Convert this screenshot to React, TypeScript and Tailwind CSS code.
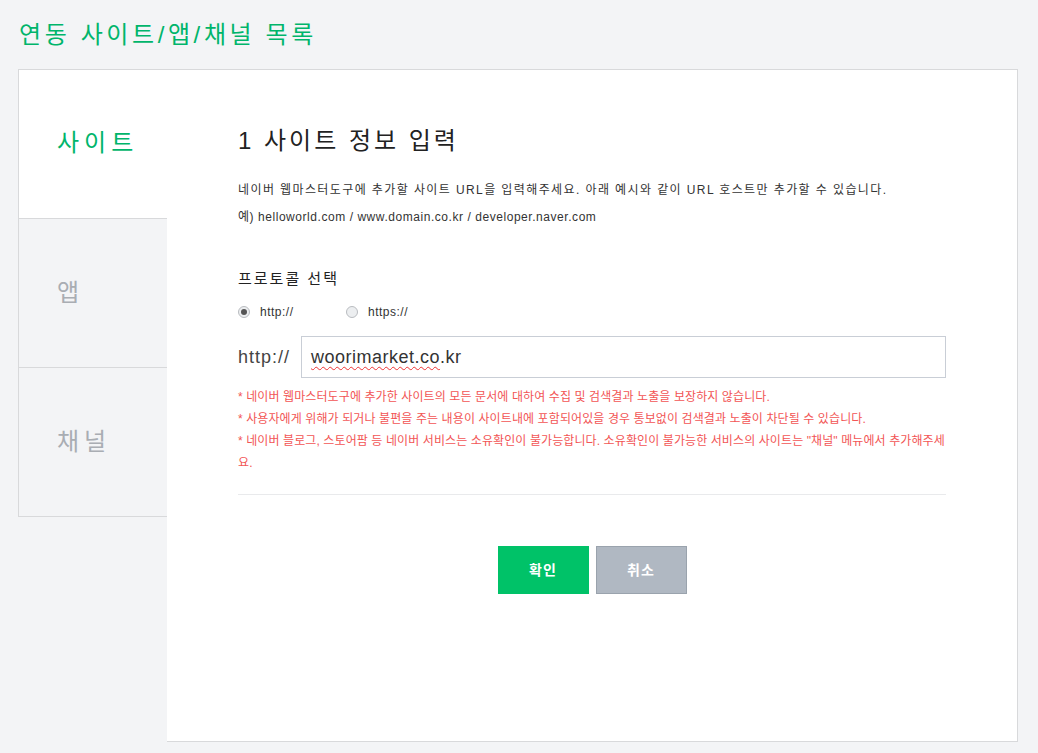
import React from "react";

const font = { fontFamily: '"Liberation Sans", "Noto Sans CJK KR", sans-serif' };

function Radio({ checked, label }: { checked?: boolean; label: string }) {
  return (
    <div className="flex items-center">
      <span className="w-[12px] h-[12px] rounded-full border border-[#b9bcc0] bg-[#eceef0] flex items-center justify-center">
        {checked && <span className="w-[6px] h-[6px] rounded-full bg-[#555]" />}
      </span>
      <span className="ml-[10px] text-[12px] text-[#333] tracking-[0.5px]">{label}</span>
    </div>
  );
}

export default function App() {
  return (
    <div className="min-h-[753px] bg-[#f3f4f6] pb-[11px]" style={font}>
      <div className="h-[70px] flex items-center pl-[19px] text-[24px] text-[#00b56b] tracking-[3.6px]">
        연동 사이트/앱/채널 목록
      </div>
      <div className="flex ml-[18px] mr-[20px] -mt-px">
        <div className="w-[150px] flex flex-col shrink-0">
          <div className="h-[149px] bg-white border-t border-l border-[#d8d9db] flex items-center pl-[38px] pb-[2px] text-[24px] text-[#00b56b] tracking-[5px]">
            사이트
          </div>
          <div className="h-[149px] bg-[#f3f4f6] border-t border-l border-r border-[#d8d9db] flex items-center pl-[38px] text-[24px] text-[#a9adb3]">
            앱
          </div>
          <div className="h-[150px] bg-[#f3f4f6] border-t border-b border-l border-r border-[#d8d9db] flex items-center pl-[38px] text-[24px] text-[#a9adb3] tracking-[5px]">
            채널
          </div>
          <div className="flex-1 border-r border-[#d8d9db]" />
        </div>
        <div className="flex-1 bg-white border-t border-r border-b border-[#d8d9db] pl-[71px] pr-[71px] pt-[55px] pb-[147px] -ml-px">
          <div className="text-[24px] leading-[32px] text-[#222] tracking-[3px]">1 사이트 정보 입력</div>
          <div className="mt-[20px] text-[12px] leading-[27px] text-[#333]">
            <div className="tracking-[1.4px] whitespace-nowrap">네이버 웹마스터도구에 추가할 사이트 URL을 입력해주세요. 아래 예시와 같이 URL 호스트만 추가할 수 있습니다.</div>
            <div className="tracking-[0.55px] whitespace-nowrap">예) helloworld.com / www.domain.co.kr / developer.naver.com</div>
          </div>
          <div className="mt-[37px] text-[15px] leading-[22px] text-[#222] tracking-[2px]">프로토콜 선택</div>
          <div className="mt-[12px] h-[20px] flex items-center">
            <div className="w-[108px]">
              <Radio checked label="http://" />
            </div>
            <Radio label="https://" />
          </div>
          <div className="mt-[14px] flex items-center h-[42px]">
            <span className="text-[18px] text-[#444] w-[63px] tracking-[1px]">http://</span>
            <div className="flex-1 h-[42px] border border-[#c9ced6] flex items-center pl-[9px] text-[18px] text-[#333] tracking-[0.5px]">
              <span className="underline decoration-wavy decoration-[#e33] decoration-1 underline-offset-[3px]">woorimarket.co</span>
              <span>.kr</span>
            </div>
          </div>
          <div className="mt-[8px] text-[12px] leading-[22px] text-[#f25555] tracking-[0.1px]">
            <div>* 네이버 웹마스터도구에 추가한 사이트의 모든 문서에 대하여 수집 및 검색결과 노출을 보장하지 않습니다.</div>
            <div>* 사용자에게 위해가 되거나 불편을 주는 내용이 사이트내에 포함되어있을 경우 통보없이 검색결과 노출이 차단될 수 있습니다.</div>
            <div>* 네이버 블로그, 스토어팜 등 네이버 서비스는 소유확인이 불가능합니다. 소유확인이 불가능한 서비스의 사이트는 "채널" 메뉴에서 추가해주세요.</div>
          </div>
          <div className="mt-[20px] h-px bg-[#e9eaec]" />
          <div className="mt-[51px] flex justify-center gap-[7px]">
            <button className="w-[91px] h-[48px] bg-[#00c268] text-white text-[14px] font-bold tracking-[1px]">확인</button>
            <button className="w-[91px] h-[48px] bg-[#b0b8c2] border border-[#9aa3ad] text-white text-[14px] font-bold tracking-[1px]">취소</button>
          </div>
        </div>
      </div>
    </div>
  );
}
